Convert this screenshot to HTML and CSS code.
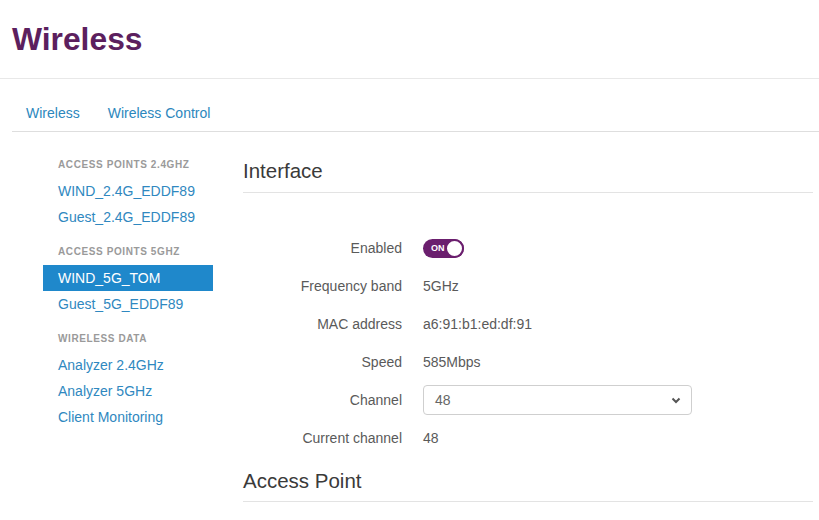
FILE: index.html
```html
<!DOCTYPE html>
<html>
<head>
<meta charset="utf-8">
<link rel="stylesheet" href="styles.css">
</head>
<body>
<header class="page-header"><h1 class="page-title">Wireless</h1></header>
<nav class="tabs">
  <a class="tab">Wireless</a>
  <a class="tab">Wireless Control</a>
</nav>
<div class="layout">
  <aside class="sidebar">
    <div class="side-heading">ACCESS POINTS 2.4GHZ</div>
    <a class="side-link">WIND_2.4G_EDDF89</a>
    <a class="side-link">Guest_2.4G_EDDF89</a>
    <div class="side-heading">ACCESS POINTS 5GHZ</div>
    <a class="side-link active">WIND_5G_TOM</a>
    <a class="side-link">Guest_5G_EDDF89</a>
    <div class="side-heading">WIRELESS DATA</div>
    <a class="side-link">Analyzer 2.4GHz</a>
    <a class="side-link">Analyzer 5GHz</a>
    <a class="side-link">Client Monitoring</a>
  </aside>
  <main class="content">
    <h2 class="section-title">Interface</h2>
    <div class="form-grid">
      <div class="label">Enabled</div>
      <div class="value"><span class="toggle"><span class="toggle-text">ON</span><span class="knob"></span></span></div>
      <div class="label">Frequency band</div>
      <div class="value">5GHz</div>
      <div class="label">MAC address</div>
      <div class="value">a6:91:b1:ed:df:91</div>
      <div class="label">Speed</div>
      <div class="value">585Mbps</div>
      <div class="label">Channel</div>
      <div class="value">
        <div class="select"><span>48</span>
          <svg class="chev" width="10" height="7" viewBox="0 0 10 7"><path d="M1.5 1.5 L5 5 L8.5 1.5" fill="none" stroke="#555" stroke-width="2"/></svg>
        </div>
      </div>
      <div class="label">Current channel</div>
      <div class="value">48</div>
    </div>
    <h2 class="section-title second">Access Point</h2>
  </main>
</div>
</body>
</html>
```
FILE: styles.css
```css
* { box-sizing: border-box; }
html, body { margin: 0; padding: 0; background: #fff; }
body {
  font-family: "Liberation Sans", Arial, sans-serif;
  color: #555;
  font-size: 14px;
  width: 819px;
  overflow: hidden;
}
.page-header {
  padding: 21px 12px 21px;
  border-bottom: 1px solid #e8e8e8;
}
.page-title {
  margin: 0;
  font-size: 31.8px;
  line-height: 36px;
  font-weight: bold;
  color: #5c1f5e;
}
.tabs {
  margin-left: 12px;
  padding-top: 24px;
  border-bottom: 1px solid #dedede;
  display: flex;
}
.tab {
  display: block;
  padding: 0 14px 8px;
  line-height: 20px;
  color: #2c87bd;
  font-size: 14px;
}
.layout {
  display: flex;
  gap: 30px;
  padding-left: 43px;
}
.sidebar {
  width: 170px;
  flex: 0 0 170px;
  padding-top: 11px;
  display: flex;
  flex-direction: column;
}
.side-heading {
  margin-top: 14px;
  margin-bottom: 5px;
  padding-left: 15px;
  font-size: 10px;
  line-height: 16px;
  font-weight: bold;
  letter-spacing: 0.6px;
  color: #9a9a9a;
}
.side-link {
  display: block;
  padding-left: 15px;
  line-height: 26px;
  height: 26px;
  font-size: 14px;
  color: #2f88c0;
}
.side-link.active {
  background: #1f88cb;
  color: #fff;
}
.content {
  width: 570px;
  flex: 0 0 570px;
}
.section-title {
  margin: 27px 0 0;
  font-size: 20.5px;
  line-height: 24px;
  font-weight: normal;
  color: #3a3a3a;
  padding-bottom: 9px;
  border-bottom: 1px solid #e3e3e3;
}
.section-title.second {
  margin-top: 12px;
  padding-bottom: 8px;
}
.form-grid {
  margin-top: 36px;
  display: grid;
  grid-template-columns: 159px 1fr;
  grid-auto-rows: 38px;
  column-gap: 21px;
  align-items: center;
}
.label {
  text-align: right;
  color: #5a5a5a;
}
.value {
  color: #5a5a5a;
  display: flex;
  align-items: center;
}
.toggle {
  width: 41px;
  height: 19px;
  border-radius: 10px;
  background: #6b1f6e;
  display: flex;
  align-items: center;
  justify-content: space-between;
  padding-left: 8px;
}
.toggle-text {
  color: #fff;
  font-size: 9px;
  font-weight: bold;
}
.knob {
  width: 19px;
  height: 19px;
  border-radius: 50%;
  background: #fff;
  border: 2px solid #6b1f6e;
}
.select {
  width: 269px;
  height: 30px;
  border: 1px solid #cfcfcf;
  border-radius: 4px;
  display: flex;
  align-items: center;
  justify-content: space-between;
  padding: 0 10px 0 11px;
  color: #666;
}
.chev { display: block; }
```
